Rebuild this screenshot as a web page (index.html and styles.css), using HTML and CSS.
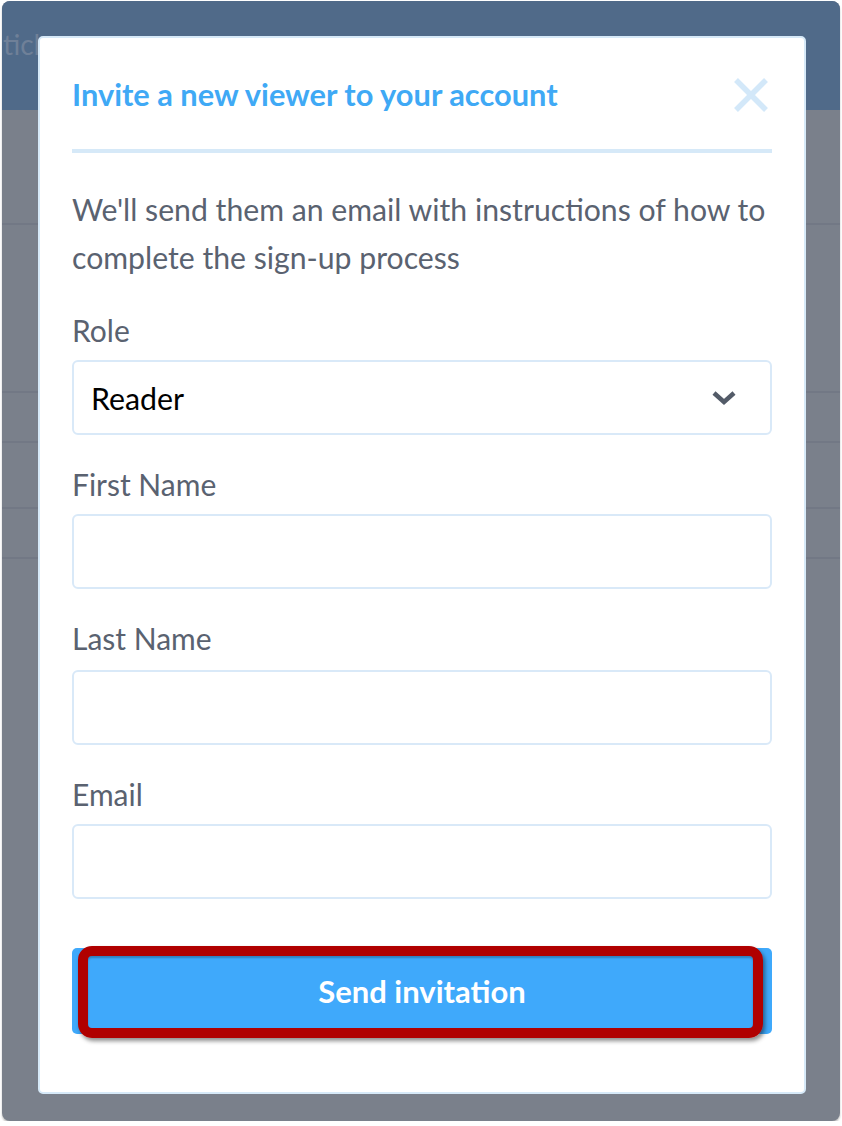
FILE: index.html
```html
<!DOCTYPE html>
<html lang="en">
<head>
<meta charset="utf-8">
<title>Invite viewer</title>
<link rel="stylesheet" href="styles.css">
</head>
<body>
<div class="window">
  <div class="topbar"><span class="topbar-title">ticles</span></div>
  <div class="bg-rows">
    <div class="bg-row r1"></div>
    <div class="bg-row r2"></div>
    <div class="bg-row r3"></div>
    <div class="bg-row r4"></div>
    <div class="bg-row r5"></div>
  </div>

  <div class="modal">
    <div class="modal-head">
      <h2 class="modal-title">Invite a new viewer to your account</h2>
      <svg class="close" width="36" height="36" viewBox="0 0 36 36" aria-hidden="true">
        <path d="M3 3 L33 33 M33 3 L3 33" stroke="#d3e8f9" stroke-width="5.5" fill="none"/>
      </svg>
    </div>
    <p class="intro">We'll send them an email with instructions of how to complete the sign-up process</p>

    <div class="field">
      <label class="label">Role</label>
      <div class="control select">
        <span class="select-value">Reader</span>
        <svg class="chevron" width="26" height="16" viewBox="0 0 26 16" aria-hidden="true">
          <path d="M3 3 L13 12 L23 3" stroke="#535b68" stroke-width="4.5" fill="none"/>
        </svg>
      </div>
    </div>
    <div class="field">
      <label class="label">First Name</label>
      <div class="control"></div>
    </div>
    <div class="field f-last">
      <label class="label">Last Name</label>
      <div class="control"></div>
    </div>
    <div class="field">
      <label class="label">Email</label>
      <div class="control"></div>
    </div>

    <div class="btn">
      Send invitation
      <span class="highlight"></span>
    </div>
  </div>
</div>
</body>
</html>
```

FILE: styles.css
```css
html, body {
  margin: 0;
  padding: 0;
  background: #ffffff;
}
body {
  font-family: Lato, "Open Sans", sans-serif;
}
.window {
  position: relative;
  margin: 1px 0 0 2px;
  width: 838px;
  height: 1120px;
  border-radius: 8px;
  overflow: hidden;
  background: #7a808b;
  box-shadow: 0 2px 2px rgba(0,0,0,0.25);
}
.topbar {
  height: 109px;
  background: #506a89;
  display: flex;
  align-items: flex-start;
}
.topbar-title {
  margin: 26px 0 0 1px;
  font-size: 28px;
  color: #6f8098;
  line-height: 34px;
}
.bg-row {
  border-bottom: 2px solid #727885;
}
.r1 { height: 113px; }
.r2 { height: 166px; }
.r3 { height: 48px; }
.r4 { height: 64px; }
.r5 { height: 48px; }

.modal {
  position: absolute;
  left: 36px;
  top: 35px;
  width: 700px;
  height: 990px;
  padding: 32px;
  background: #ffffff;
  border: 2px solid #d6e9f8;
  border-radius: 5px;
}
.modal-head {
  display: flex;
  align-items: center;
  justify-content: space-between;
  padding-bottom: 29px;
  border-bottom: 4px solid #d6e9f8;
}
.modal-title {
  margin: 0;
  font-size: 30.8px;
  font-weight: 700;
  line-height: 50px;
  color: #3fa9f5;
}
.close {
  margin-right: 3px;
  display: block;
}
.intro {
  margin: 32px 0 0;
  font-size: 30.2px;
  line-height: 48px;
  color: #5a6270;
}
.field {
  margin-top: 26px;
}
.label {
  display: block;
  font-size: 30px;
  line-height: 48px;
  color: #5a6270;
  margin: -1px 0 6px;
}
.f-last .label {
  margin-bottom: 8px;
}
.control {
  box-sizing: border-box;
  height: 75px;
  border: 2px solid #d9e9f8;
  border-radius: 6px;
}
.select {
  display: flex;
  align-items: center;
  justify-content: space-between;
  padding: 0 33px 0 17px;
}
.select-value {
  font-size: 30.3px;
  color: #000000;
}
.chevron {
  display: block;
}
.btn {
  position: relative;
  margin-top: 49px;
  height: 86px;
  border-radius: 5px;
  background: #3fa9fb;
  color: #ffffff;
  font-size: 31px;
  font-weight: 700;
  display: flex;
  align-items: center;
  justify-content: center;
}
.highlight {
  position: absolute;
  left: 6px;
  right: 9px;
  top: -2px;
  bottom: -4px;
  border: 10px solid #b00000;
  border-radius: 14px;
  box-shadow: 2px 3px 4px rgba(0,0,0,0.45), inset 0 2px 2px rgba(0,0,0,0.25);
}
```
